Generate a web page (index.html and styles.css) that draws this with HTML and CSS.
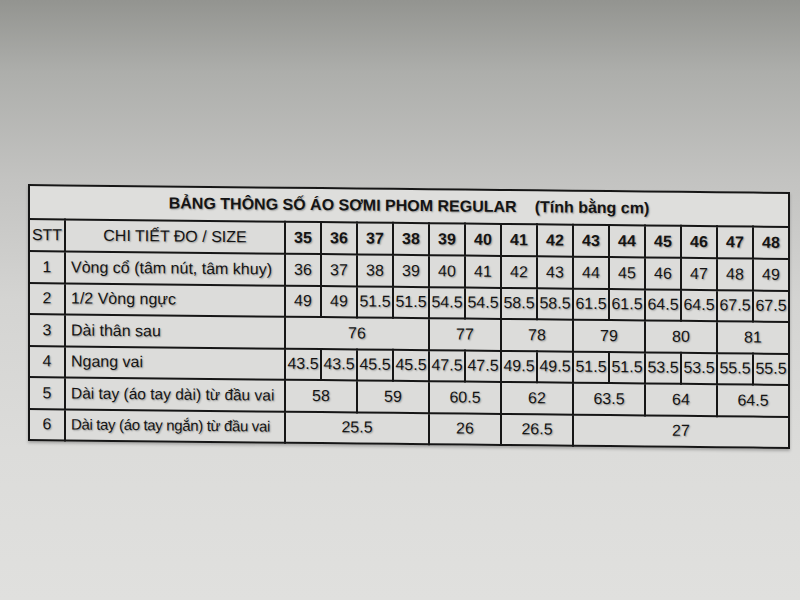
FILE: index.html
```html
<!DOCTYPE html>
<html lang="vi">
<head>
<meta charset="utf-8">
<title>Bảng thông số áo sơmi phom regular</title>
<link rel="stylesheet" href="styles.css">
</head>
<body>
<main class="scene">
  <table class="chart">
    <colgroup>
      <col class="c-stt"><col class="c-detail">
      <col class="c-size"><col class="c-size"><col class="c-size"><col class="c-size">
      <col class="c-size"><col class="c-size"><col class="c-size"><col class="c-size">
      <col class="c-size"><col class="c-size"><col class="c-size"><col class="c-size">
      <col class="c-size"><col class="c-size">
    </colgroup>
    <tr class="r-title">
      <th colspan="16"><span class="title-main">BẢNG THÔNG SỐ ÁO SƠMI PHOM REGULAR</span><span class="title-unit">(Tính bằng cm)</span></th>
    </tr>
    <tr class="r-head">
      <th class="stt-h">STT</th>
      <th class="detail-h">CHI TIẾT ĐO / SIZE</th>
      <th>35</th><th>36</th><th>37</th><th>38</th><th>39</th><th>40</th><th>41</th>
      <th>42</th><th>43</th><th>44</th><th>45</th><th>46</th><th>47</th><th>48</th>
    </tr>
    <tr>
      <td class="stt">1</td><td class="detail">Vòng cổ (tâm nút, tâm khuy)</td>
      <td>36</td><td>37</td><td>38</td><td>39</td><td>40</td><td>41</td><td>42</td>
      <td>43</td><td>44</td><td>45</td><td>46</td><td>47</td><td>48</td><td>49</td>
    </tr>
    <tr>
      <td class="stt">2</td><td class="detail">1/2 Vòng ngực</td>
      <td>49</td><td>49</td><td>51.5</td><td>51.5</td><td>54.5</td><td>54.5</td><td>58.5</td>
      <td>58.5</td><td>61.5</td><td>61.5</td><td>64.5</td><td>64.5</td><td>67.5</td><td>67.5</td>
    </tr>
    <tr>
      <td class="stt">3</td><td class="detail">Dài thân sau</td>
      <td colspan="4">76</td><td colspan="2">77</td><td colspan="2">78</td>
      <td colspan="2">79</td><td colspan="2">80</td><td colspan="2">81</td>
    </tr>
    <tr>
      <td class="stt">4</td><td class="detail">Ngang vai</td>
      <td>43.5</td><td>43.5</td><td>45.5</td><td>45.5</td><td>47.5</td><td>47.5</td><td>49.5</td>
      <td>49.5</td><td>51.5</td><td>51.5</td><td>53.5</td><td>53.5</td><td>55.5</td><td>55.5</td>
    </tr>
    <tr>
      <td class="stt">5</td><td class="detail detail-long">Dài tay (áo tay dài) từ đầu vai</td>
      <td colspan="2">58</td><td colspan="2">59</td><td colspan="2">60.5</td><td colspan="2">62</td>
      <td colspan="2">63.5</td><td colspan="2">64</td><td colspan="2">64.5</td>
    </tr>
    <tr>
      <td class="stt">6</td><td class="detail detail-longer">Dài tay (áo tay ngắn) từ đầu vai</td>
      <td colspan="4">25.5</td><td colspan="2">26</td><td colspan="2">26.5</td><td colspan="6">27</td>
    </tr>
  </table>
</main>
</body>
</html>
```

FILE: styles.css
```css
html, body {
  margin: 0;
  padding: 0;
}

body {
  width: 800px;
  height: 600px;
  overflow: hidden;
  background: linear-gradient(to bottom,
    #939490 0%,
    #adaeab 12%,
    #c3c3c1 30%,
    #d4d4d2 50%,
    #dcdcda 75%,
    #e0e0de 100%);
  font-family: "Liberation Sans", Arial, sans-serif;
  color: #141414;
}

.scene {
  padding-top: 188px;
  padding-left: 28px;
}

.chart {
  width: 761px;
  table-layout: fixed;
  border-collapse: collapse;
  background: #dcdcda;
  border: 2.5px solid #161616;
  transform: skewY(0.6deg);
  transform-origin: 50% 50%;
  box-shadow: 0 2px 3px rgba(0, 0, 0, 0.25);
}

.c-stt { width: 36px; }
.c-detail { width: 220px; }
.c-size { width: 36px; }

.chart th,
.chart td {
  border: 2px solid #161616;
  padding: 0;
  text-align: center;
  vertical-align: middle;
  font-size: 16px;
  line-height: 18px;
  white-space: nowrap;
  overflow: hidden;
  text-shadow: 1px 1px 1.5px rgba(0, 0, 0, 0.3);
}

.r-title th {
  height: 32px;
  font-weight: bold;
  background: #dededc;
}

.title-main {
  margin-right: 18px;
}

.r-head th {
  height: 30px;
  font-weight: bold;
}

.r-head .stt-h,
.r-head .detail-h {
  font-weight: normal;
}

.chart td {
  height: 29.5px;
}

.chart td.detail {
  text-align: left;
  padding-left: 5px;
}

.chart td.detail-long {
  font-size: 15.5px;
}

.chart td.detail-longer {
  font-size: 15px;
  letter-spacing: -0.35px;
}
```
